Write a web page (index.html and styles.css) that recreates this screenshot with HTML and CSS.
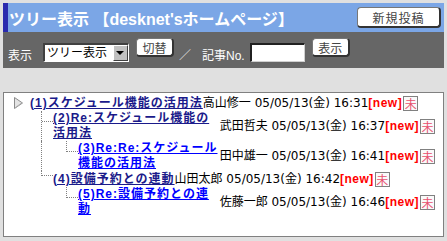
FILE: index.html
```html
<!DOCTYPE html>
<html lang="ja">
<head>
<meta charset="UTF-8">
<title>ツリー表示</title>
<link rel="stylesheet" href="styles.css">
</head>
<body>
<div class="page">
  <div class="titlebar">
    <h1 class="title">ツリー表示 【desknet'sホームページ】</h1>
    <button class="btn btn-new">新規投稿</button>
  </div>
  <div class="toolbar">
    <span class="lbl lbl-view">表示</span>
    <span class="sel"><select><option>ツリー表示</option></select></span>
    <button class="btn btn-sm">切替</button>
    <span class="slash">／</span>
    <span class="lbl lbl-no">記事No.</span>
    <input type="text" class="no-input">
    <button class="btn btn-sm">表示</button>
  </div>
  <div class="tree">
    <div class="row">
      <svg class="mark" width="9" height="12" viewBox="0 0 9 12"><polygon points="0.5,0.5 8.5,6 0.5,11.5" fill="#e4e4e4" stroke="#8c8c8c"/><polyline points="1.5,10.5 7.5,6" fill="none" stroke="#b0b0b0"/></svg>
      <a class="subj visited" href="#">(1)スケジュール機能の活用法</a>
      <span class="info">高山修一 05/05/13(金) 16:31<b class="new">[new]</b><span class="mi">未</span></span>
    </div>
    <div class="row">
      <span class="indent"></span>
      <span class="conn tee"></span>
      <a class="subj visited" href="#">(2)Re:スケジュール機能の<span class="nw">活用法</span></a>
      <span class="info">武田哲夫 05/05/13(金) 16:37<b class="new">[new]</b><span class="mi">未</span></span>
    </div>
    <div class="row">
      <span class="indent"></span>
      <span class="pipe"></span>
      <span class="conn last"></span>
      <a class="subj" href="#">(3)Re:Re:スケジュール<span class="nw">機能の活用法</span></a>
      <span class="info">田中雄一 05/05/13(金) 16:41<b class="new">[new]</b><span class="mi">未</span></span>
    </div>
    <div class="row">
      <span class="indent"></span>
      <span class="conn last short"></span>
      <a class="subj visited" href="#">(4)設備予約との連動</a>
      <span class="info">山田太郎 05/05/13(金) 16:42<b class="new">[new]</b><span class="mi">未</span></span>
    </div>
    <div class="row">
      <span class="indent"></span>
      <span class="blank"></span>
      <span class="conn last"></span>
      <a class="subj" href="#">(5)Re:設備予約との連動</a>
      <span class="info">佐藤一郎 05/05/13(金) 16:46<b class="new">[new]</b><span class="mi">未</span></span>
    </div>
  </div>
</div>
</body>
</html>
```
FILE: styles.css
```css
body {
  margin: 0;
  background-color: #e0e0e0;
  font-family: "DejaVu Sans", "Noto Sans CJK JP", sans-serif;
  font-size: 12px;
  color: #000;
}
.page {
  padding: 3px;
}
.titlebar {
  display: flex;
  align-items: center;
  justify-content: space-between;
  height: 29px;
  background-color: #7ba6e6;
  border-left: 5px solid #2a2aae;
  padding-right: 3px;
}
.title {
  margin: 0 0 0 1px;
  font: bold 16px "Liberation Sans", "Noto Sans CJK JP", sans-serif;
  color: #fff;
  white-space: nowrap;
}
.btn {
  font: 12px "Liberation Sans", "Noto Sans CJK JP", sans-serif;
  color: #444;
  background-color: #fff;
  border: 1px solid #777;
  border-right: 2px solid #333;
  border-bottom: 2px solid #333;
  border-radius: 4px;
  padding: 0;
  box-sizing: border-box;
  cursor: pointer;
}
.btn-new {
  width: 84px;
  height: 21px;
  letter-spacing: 1px;
}
.toolbar {
  display: flex;
  align-items: flex-start;
  height: 36px;
  background-color: #666;
  padding-left: 5px;
  color: #fff;
  font-family: "Liberation Sans", "Noto Sans CJK JP", sans-serif;
}
.lbl {
  margin-top: 17px;
  line-height: 14px;
}
.lbl-view {
  margin-right: 11px;
}
.lbl-no {
  margin-right: 5px;
}
.sel {
  position: relative;
  margin-top: 11px;
  margin-right: 7px;
}
.sel select {
  display: block;
  appearance: none;
  width: 86px;
  height: 19px;
  box-sizing: border-box;
  margin: 0;
  padding: 0 0 0 2px;
  font: 12px "Liberation Sans", "Noto Sans CJK JP", sans-serif;
  color: #000;
  background-color: #fff;
  border-style: solid;
  border-width: 2px 1px 1px 2px;
  border-color: #404040 #fff #fff #404040;
  border-radius: 0;
}
.sel::after {
  content: "";
  position: absolute;
  right: 1px;
  top: 2px;
  width: 15px;
  height: 16px;
  box-sizing: border-box;
  background-color: #c0c0c0;
  border: 1px solid;
  border-color: #fff #404040 #404040 #fff;
  pointer-events: none;
}
.sel::before {
  content: "";
  position: absolute;
  right: 5px;
  top: 8px;
  z-index: 1;
  border-left: 4px solid transparent;
  border-right: 4px solid transparent;
  border-top: 4px solid #000;
  pointer-events: none;
}
.btn-sm {
  width: 38px;
  height: 19px;
  margin-top: 6px;
}
.slash {
  margin: 17px 11px 0 5px;
  line-height: 14px;
  color: #ddd;
}
.no-input {
  width: 55px;
  height: 19px;
  box-sizing: border-box;
  margin: 11px 7px 0 0;
  padding: 0 2px;
  background-color: #fff;
  border-style: solid;
  border-width: 2px 1px 1px 2px;
  border-color: #202020 #d0d0d0 #d0d0d0 #202020;
}
.tree {
  margin-top: 24px;
  height: 145px;
  box-sizing: border-box;
  background-color: #fff;
  border: 1px solid #808080;
  padding: 2px 8px 0 10px;
}
.row {
  display: flex;
  align-items: center;
  min-height: 16px;
}
.mark {
  flex: none;
  margin-right: 7px;
}
.indent {
  flex: none;
  width: 27px;
  align-self: stretch;
}
.pipe,
.blank {
  flex: none;
  width: 25px;
  align-self: stretch;
  box-sizing: border-box;
}
.pipe {
  border-left: 1px dotted #808080;
}
.conn {
  flex: none;
  width: 12px;
  align-self: stretch;
  box-sizing: border-box;
}
.conn::before {
  content: "";
  display: block;
  height: 10px;
  border-bottom: 1px dotted #808080;
}
.conn.tee {
  border-left: 1px dotted #808080;
}
.conn.last::before {
  border-left: 1px dotted #808080;
}
.conn.short::before {
  height: 4px;
}
.subj {
  flex: 0 1 auto;
  min-width: 0;
  font: bold 12px/15px "Liberation Sans", "Noto Sans CJK JP", sans-serif;
  letter-spacing: 1px;
  color: #0000ff;
}
.subj.visited {
  color: #1a1a8a;
}
.nw {
  white-space: nowrap;
}
.info {
  flex: none;
  display: flex;
  align-items: center;
  white-space: nowrap;
  line-height: 15px;
}
.new {
  font: bold 12px "Liberation Sans", sans-serif;
  letter-spacing: 0.5px;
  color: #ff0000;
}
.mi {
  display: inline-block;
  width: 13px;
  height: 13px;
  margin-left: 1px;
  border: 1px solid #808080;
  background-color: #fafafa;
  color: #e8506e;
  font-family: "Noto Sans CJK JP", sans-serif;
  font-size: 12px;
  line-height: 13px;
  text-align: center;
}
```
